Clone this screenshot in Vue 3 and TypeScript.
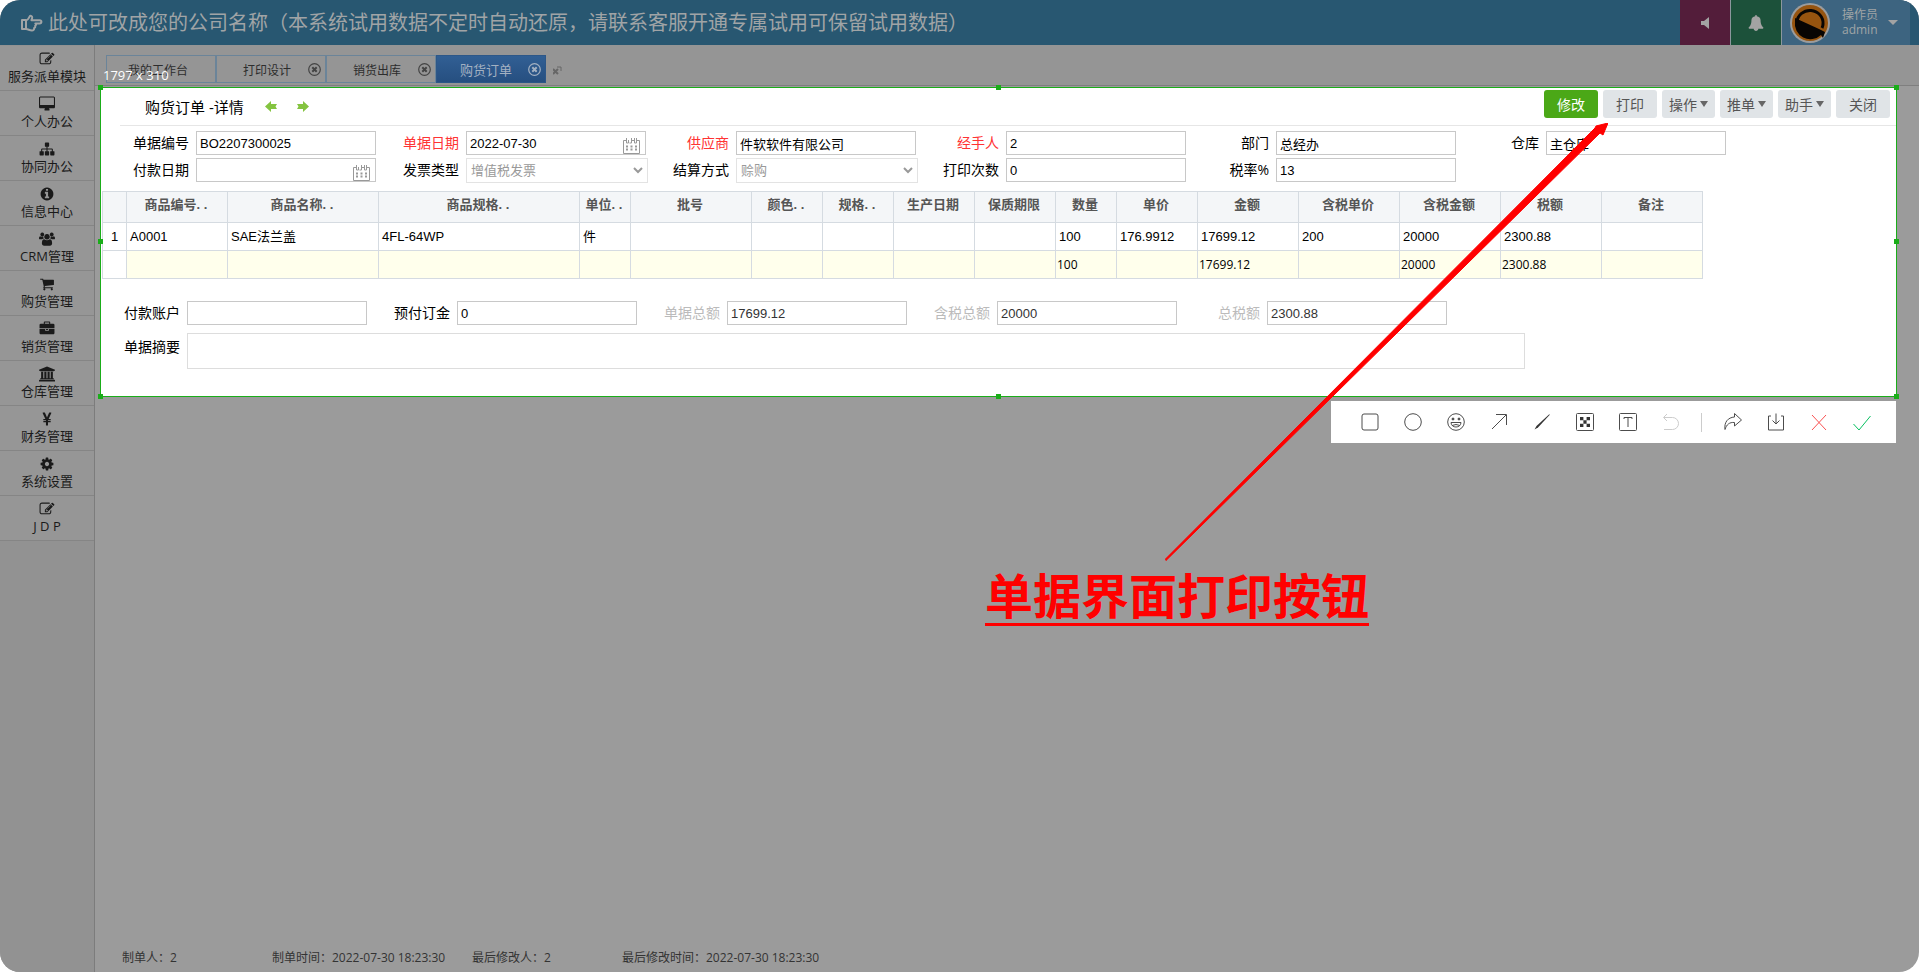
<script setup lang="ts">
import { ref } from 'vue'

interface MenuItem { label: string; icon: string }
interface Tab { label: string; closable: boolean; active?: boolean }
interface Field {
  id: string
  label: string
  value: string
  kind?: 'date' | 'select'
  tone?: 'required' | 'muted'
}
interface Column { title: string; width: number; value: string; total: string }

const menu: MenuItem[] = [
  { label: '服务派单模块', icon: 'edit' },
  { label: '个人办公', icon: 'desktop' },
  { label: '协同办公', icon: 'sitemap' },
  { label: '信息中心', icon: 'info' },
  { label: 'CRM管理', icon: 'users' },
  { label: '购货管理', icon: 'cart' },
  { label: '销货管理', icon: 'briefcase' },
  { label: '仓库管理', icon: 'bank' },
  { label: '财务管理', icon: 'yen' },
  { label: '系统设置', icon: 'gear' },
  { label: 'J D P', icon: 'edit' }
]

const glyphs: Record<string, string> = {
  edit: 'M888 1184l116-116-152-152-116 116v56h96v96h56zm440-720q-16-16-33 1l-350 350q-17 17-1 33t33-1l350-350q17-17 1-33zm80 594v190q0 119-84.5 203.5t-203.5 84.5h-832q-119 0-203.5-84.5t-84.5-203.5v-832q0-119 84.5-203.5t203.5-84.5h832q63 0 117 25 15 7 18 23 3 17-9 29l-49 49q-14 14-32 8-23-6-45-6h-832q-66 0-113 47t-47 113v832q0 66 47 113t113 47h832q66 0 113-47t47-113v-126q0-13 9-22l64-64q15-15 35-7t20 29zm-96-738l288 288-672 672h-288v-288zm444 132l-92 92-288-288 92-92q28-28 68-28t68 28l152 152q28 28 28 68t-28 68z',
  desktop: 'M1728 992v-832q0-13-9.5-22.5t-22.5-9.5h-1600q-13 0-22.5 9.5t-9.5 22.5v832q0 13 9.5 22.5t22.5 9.5h1600q13 0 22.5-9.5t9.5-22.5zm128-832v1088q0 66-47 113t-113 47h-544q0 37 16 77.5t32 71 16 43.5q0 26-19 45t-45 19h-512q-26 0-45-19t-19-45q0-14 16-44t32-70 16-78h-544q-66 0-113-47t-47-113v-1088q0-66 47-113t113-47h1600q66 0 113 47t47 113z',
  sitemap: 'M1792 1248v320q0 40-28 68t-68 28h-320q-40 0-68-28t-28-68v-320q0-40 28-68t68-28h96v-192h-512v192h96q40 0 68 28t28 68v320q0 40-28 68t-68 28h-320q-40 0-68-28t-28-68v-320q0-40 28-68t68-28h96v-192h-512v192h96q40 0 68 28t28 68v320q0 40-28 68t-68 28h-320q-40 0-68-28t-28-68v-320q0-40 28-68t68-28h96v-192q0-52 38-90t90-38h512v-192h-96q-40 0-68-28t-28-68v-320q0-40 28-68t68-28h320q40 0 68 28t28 68v320q0 40-28 68t-68 28h-96v192h512q52 0 90 38t38 90v192h96q40 0 68 28t28 68z',
  info: 'M1152 1376v-160q0-14-9-23t-23-9h-96v-512q0-14-9-23t-23-9h-320q-14 0-23 9t-9 23v160q0 14 9 23t23 9h96v320h-96q-14 0-23 9t-9 23v160q0 14 9 23t23 9h448q14 0 23-9t9-23zm-128-896v-160q0-14-9-23t-23-9h-192q-14 0-23 9t-9 23v160q0 14 9 23t23 9h192q14 0 23-9t9-23zm640 416q0 209-103 385.5t-279.5 279.5-385.5 103-385.5-103-279.5-279.5-103-385.5 103-385.5 279.5-279.5 385.5-103 385.5 103 279.5 279.5 103 385.5z',
  users: 'M330 130a230 230 0 1 0 1 0zM1462 130a230 230 0 1 0 1 0zM896 300a330 330 0 1 0 1 0zM-60 880V760q0-190 150-190 60 60 240 60 70 0 120-25-10 120 80 245-130 5-220 90H60q-120 0-120-60zM1852 880V760q0-190-150-190-60 60-240 60-70 0-120-25 10 120-80 245 130 5 220 90h250q120 0 120-60zM280 1450q0-520 290-520 130 110 326 110t326-110q290 0 290 520 0 250-240 250H520q-240 0-240-250z',
  cart: 'M704 1536q0 52-38 90t-90 38-90-38-38-90 38-90 90-38 90 38 38 90zm896 0q0 52-38 90t-90 38-90-38-38-90 38-90 90-38 90 38 38 90zm128-1088v512q0 24-16.5 42.5t-40.5 21.5l-1044 122q13 60 13 70 0 16-24 64h920q26 0 45 19t19 45-19 45-45 19h-1024q-26 0-45-19t-19-45q0-11 8-31.5t16-36 21.5-40 15.5-29.5l-177-823h-204q-26 0-45-19t-19-45 19-45 45-19h256q16 0 28.5 6.5t19.5 15.5 13 24.5 8 26 5.5 29.5 4.5 26h1201q26 0 45 19t19 45z',
  briefcase: 'M640 256h512v-128h-512v128zm1152 640v480q0 66-47 113t-113 47h-1472q-66 0-113-47t-47-113v-480h672v160q0 26 19 45t45 19h320q26 0 45-19t19-45v-160h672zm-768 0v128h-256v-128h256zm768-480v384h-1792v-384q0-66 47-113t113-47h352v-160q0-40 28-68t68-28h576q40 0 68 28t28 68v160h352q66 0 113 47t47 113z',
  bank: 'M896 0l960 384v128h-128q0 64-69 64H133q-69 0-69-64H-64V384zM192 640h256v768h128V640h256v768h128V640h256v768h128V640h256v768h59q69 0 69 64v64H64v-64q0-64 69-64h59zM1787 1600q69 0 69 64v128H-64v-128q0-64 69-64z',
  yen: 'M1000 1664H790q-20 0-20-26v-340H480q-26 0-26-24v-110q0-26 26-26h290v-94H480q-26 0-26-24V910q0-26 26-26h220L368 170q-12-42 30-42h220q20 0 30 20 220 470 250 570 40-110 250-570 10-20 30-20h210q42 0 30 42l-330 714h226q26 0 26 26v110q0 24-26 24h-300v94h300q26 0 26 26v110q0 24-26 24h-300v340q0 26-14 26z',
  gear: 'M1152 896q0-106-75-181t-181-75-181 75-75 181 75 181 181 75 181-75 75-181zm512-109v222q0 12-8 23t-20 13l-185 28q-19 54-39 91 35 50 107 138 10 12 10 25t-9 23q-27 37-99 108t-94 71q-12 0-26-9l-138-108q-44 23-91 38-16 136-29 186-7 28-36 28h-222q-14 0-24.5-8.5t-11.5-21.5l-28-184q-49-16-90-37l-141 107q-10 9-25 9-14 0-25-11-126-114-165-168-7-10-7-23 0-12 8-23 15-21 51-66.5t54-70.5q-27-50-41-99l-183-27q-13-2-21-12.5t-8-23.5v-222q0-12 8-23t19-13l186-28q14-46 39-92-40-57-107-138-10-12-10-24 0-10 9-23 26-36 98.5-107.5t94.5-71.5q13 0 26 10l138 107q44-23 91-38 16-136 29-186 7-28 36-28h222q14 0 24.5 8.5t11.5 21.5l28 184q49 16 90 37l142-107q9-9 24-9 13 0 25 10 129 119 165 170 7 8 7 22 0 12-8 23-15 21-51 66.5t-54 70.5q26 50 41 98l183 28q13 2 21 12.5t8 23.5z',
  bell: 'M1728 1408q0 52-38 90t-90 38h-448q0 106-75 181t-181 75-181-75-75-181h-448q-52 0-90-38t-38-90q50-42 91-88t85-119.5 74.5-158.5 50-206 19.5-260q0-152 117-282.5t307-158.5q-8-19-8-39 0-40 28-68t68-28 68 28 28 68q0 20-8 39 190 28 307 158.5t117 282.5q0 139 19.5 260t50 206 74.5 158.5 85 119.5 91 88z'
}

const tabs: Tab[] = [
  { label: '我的工作台', closable: false },
  { label: '打印设计', closable: true },
  { label: '销货出库', closable: true },
  { label: '购货订单', closable: true, active: true }
]

const fields = ref<Field[]>([
  { id: 'billNo', label: '单据编号', value: 'BO2207300025' },
  { id: 'billDate', label: '单据日期', value: '2022-07-30', kind: 'date', tone: 'required' },
  { id: 'supplier', label: '供应商', value: '件软软件有限公司', tone: 'required' },
  { id: 'handler', label: '经手人', value: '2', tone: 'required' },
  { id: 'dept', label: '部门', value: '总经办' },
  { id: 'store', label: '仓库', value: '主仓库' },
  { id: 'payDate', label: '付款日期', value: '', kind: 'date' },
  { id: 'invoice', label: '发票类型', value: '增值税发票', kind: 'select' },
  { id: 'settle', label: '结算方式', value: '赊购', kind: 'select' },
  { id: 'prints', label: '打印次数', value: '0' },
  { id: 'rate', label: '税率%', value: '13' }
])

const totals = ref<Field[]>([
  { id: 'account', label: '付款账户', value: '' },
  { id: 'deposit', label: '预付订金', value: '0' },
  { id: 'sum', label: '单据总额', value: '17699.12', tone: 'muted' },
  { id: 'taxedSum', label: '含税总额', value: '20000', tone: 'muted' },
  { id: 'taxSum', label: '总税额', value: '2300.88', tone: 'muted' }
])
const summary = ref('')

const columns: Column[] = [
  { title: '商品编号. .', width: 101, value: 'A0001', total: '' },
  { title: '商品名称. .', width: 151, value: 'SAE法兰盖', total: '' },
  { title: '商品规格. .', width: 201, value: '4FL-64WP', total: '' },
  { title: '单位. .', width: 51, value: '件', total: '' },
  { title: '批号', width: 121, value: '', total: '' },
  { title: '颜色. .', width: 71, value: '', total: '' },
  { title: '规格. .', width: 71, value: '', total: '' },
  { title: '生产日期', width: 81, value: '', total: '' },
  { title: '保质期限', width: 81, value: '', total: '' },
  { title: '数量', width: 61, value: '100', total: '100' },
  { title: '单价', width: 81, value: '176.9912', total: '' },
  { title: '金额', width: 101, value: '17699.12', total: '17699.12' },
  { title: '含税单价', width: 101, value: '200', total: '' },
  { title: '含税金额', width: 101, value: '20000', total: '20000' },
  { title: '税额', width: 101, value: '2300.88', total: '2300.88' },
  { title: '备注', width: 101, value: '', total: '' }
]

const actions = [
  { label: '修改', primary: true, menu: false },
  { label: '打印', primary: false, menu: false },
  { label: '操作', primary: false, menu: true },
  { label: '推单', primary: false, menu: true },
  { label: '助手', primary: false, menu: true },
  { label: '关闭', primary: false, menu: false }
]

const handles = ['nw', 'n', 'ne', 'w', 'e', 'sw', 's', 'se']
const tools = ['rect', 'ellipse', 'emoji', 'arrow', 'pen', 'mosaic', 'text', 'undo', 'share', 'save', 'cancel', 'confirm']
</script>

<template>
  <div class="page">
    <header class="top">
      <svg class="hand" viewBox="0 0 22 18" aria-hidden="true">
        <path d="M1 6h4v9H1zM5 6.500c2-.3 2.500-2 3.500-3.800.8-1.400 2.800-1 2.700.8 0 1-.4 1.800-.8 2.700h8.200c2.400 0 2.400 3.200 0 3.200h-4.300c1 .8.900 2-.2 2.500.5 1-.1 2-1 2.200.2 1.600-.7 2.400-2.200 2.400-2.600 0-3.400-1.300-5.900-1.500" />
      </svg>
      <h1>此处可改成您的公司名称（本系统试用数据不定时自动还原，请联系客服开通专属试用可保留试用数据）</h1>
      <div class="top-right">
        <button class="tile sound" type="button" aria-label="声音">
          <svg width="8" height="12" viewBox="0 0 8 12"><path d="M0 4h3l5-4v12L3 8H0z" /></svg>
        </button>
        <button class="tile bell" type="button" aria-label="通知">
          <svg width="16" height="16" viewBox="0 0 1792 1792"><path :d="glyphs.bell" /></svg>
        </button>
        <button class="user" type="button">
          <svg class="avatar" width="40" height="40" viewBox="0 0 40 40" aria-hidden="true">
            <circle cx="20" cy="20" r="20" fill="#9c9c9c" />
            <circle cx="20" cy="20" r="18" fill="#96540f" />
            <path d="M5 18.500A15.500 15.500 0 0 0 31 32l2 3 2-6-6-3-24-11z" fill="#080503" />
            <path d="M7 19A13 12.500 0 0 1 33 21q0 2-1 4" fill="none" stroke="#080503" stroke-width="3" />
          </svg>
          <span class="who"><span>操作员</span><span>admin</span></span>
          <svg width="10" height="5" viewBox="0 0 10 5" aria-hidden="true"><path d="M0 0h10L5 5z" /></svg>
        </button>
      </div>
    </header>

    <div class="body">
      <nav class="side">
        <a v-for="item in menu" :key="item.label" href="#">
          <svg width="16" height="16" viewBox="-64 0 1920 1792" aria-hidden="true"><path :d="glyphs[item.icon]" /></svg>
          <span>{{ item.label }}</span>
        </a>
      </nav>

      <main class="main">
        <div class="tabs">
          <div v-for="tab in tabs" :key="tab.label" class="tab" :class="{ active: tab.active }">
            <a href="#">{{ tab.label }}</a>
            <button v-if="tab.closable" type="button" :aria-label="'关闭' + tab.label">
              <svg width="13" height="13" viewBox="0 0 13 13"><circle cx="6.500" cy="6.500" r="5.800" stroke-width="1.200" /><path d="M4.300 4.300l4.400 4.400M8.700 4.300l-4.400 4.400" stroke-width="2" /></svg>
            </button>
          </div>
          <svg class="shrink" width="9" height="9" viewBox="0 0 9 9" aria-hidden="true"><path d="M0 3l5 5M5 3L0 8" stroke-width="2" /><path d="M4 1h4v4" stroke-width="1" /></svg>
        </div>

        <section class="capture">
          <span class="size">1797 x 310</span>
          <i v-for="h in handles" :key="h" class="handle" :class="h"></i>

          <div class="bar">
            <h2>购货订单 -详情</h2>
            <button class="step" type="button" aria-label="上一单">
              <svg width="12" height="11" viewBox="0 0 12 11"><path d="M0 5.500L6 0v3h6l-1.500 2.500L12 8H6v3z" /></svg>
            </button>
            <button class="step" type="button" aria-label="下一单">
              <svg width="12" height="11" viewBox="0 0 12 11"><path d="M12 5.500L6 0v3H0l1.500 2.500L0 8h6v3z" /></svg>
            </button>
            <div class="actions">
              <button v-for="a in actions" :key="a.label" type="button" class="btn" :class="{ primary: a.primary, more: a.menu }">
                {{ a.label }}<svg v-if="a.menu" width="8" height="6" viewBox="0 0 8 6" aria-hidden="true"><path d="M0 0h8L4 6z" /></svg>
              </button>
            </div>
          </div>

          <div class="grid head-grid">
            <div v-for="f in fields" :key="f.id" class="field" :class="f.tone">
              <label :for="f.id">{{ f.label }}</label>
              <div class="control">
                <template v-if="f.kind === 'select'">
                  <select :id="f.id" v-model="f.value" disabled><option>{{ f.value }}</option></select>
                  <svg class="chev" width="10" height="7" viewBox="0 0 10 7" aria-hidden="true"><path d="M1 1l4 4 4-4" /></svg>
                </template>
                <template v-else>
                  <input :id="f.id" v-model="f.value" type="text" />
                  <svg v-if="f.kind === 'date'" class="cal" width="17" height="17" viewBox="0 0 17 17" aria-hidden="true">
                    <path d="M3.500 3.500h-3v13h16v-13h-3M3.500 1v5h2V3M8.500 1v5h-2M8.500 3.500h3M11.500 1v5h2V1" />
                    <path d="M3 9.500h11M3 12.500h11" stroke-width="2" stroke-dasharray="2 2.500" />
                  </svg>
                </template>
              </div>
            </div>
          </div>

          <table>
            <colgroup><col class="num" /><col v-for="(c, i) in columns" :key="i" :style="{ width: c.width + 'px' }" /></colgroup>
            <thead>
              <tr><th></th><th v-for="(c, i) in columns" :key="i" scope="col">{{ c.title }}</th></tr>
            </thead>
            <tbody>
              <tr><td class="idx">1</td><td v-for="(c, i) in columns" :key="i">{{ c.value }}</td></tr>
              <tr class="total"><td class="idx"></td><td v-for="(c, i) in columns" :key="i">{{ c.total }}</td></tr>
            </tbody>
          </table>

          <div class="foot-form">
            <div class="grid">
              <div v-for="f in totals" :key="f.id" class="field" :class="f.tone">
                <label :for="f.id">{{ f.label }}</label>
                <div class="control"><input :id="f.id" v-model="f.value" type="text" /></div>
              </div>
            </div>
            <div class="field memo">
              <label for="summary">单据摘要</label>
              <textarea id="summary" v-model="summary"></textarea>
            </div>
          </div>
        </section>

        <div class="tools">
          <template v-for="t in tools" :key="t">
            <i v-if="t === 'share'" class="sep"></i>
            <button type="button" :class="t" :aria-label="t">
              <svg width="20" height="20" viewBox="0 0 20 20">
                <rect v-if="t === 'rect'" x="2" y="2" width="16" height="16" rx="2" />
                <circle v-else-if="t === 'ellipse'" cx="10" cy="10" r="8.300" />
                <template v-else-if="t === 'emoji'">
                  <circle cx="10" cy="10" r="8.300" />
                  <path d="M5 10.500h10c0 6-10 6-10 0zM6 13.500q4-2 8 0" />
                  <circle cx="7" cy="7" r="1" class="solid" /><circle cx="13" cy="7" r="1" class="solid" />
                </template>
                <path v-else-if="t === 'arrow'" d="M3 17L17 3M7 2.500h10.500V13" />
                <path v-else-if="t === 'pen'" class="solid" d="M2.500 17.500l2-3.500L17 2.500h1L6 15.500z" stroke="none" />
                <template v-else-if="t === 'mosaic'">
                  <rect x="1.500" y="1.500" width="17" height="17" rx="1" />
                  <path class="solid" d="M5 5h3.400v3.300H5zM11.600 5H15v3.300h-3.400zM8.400 8.300h3.200v3.400H8.400zM5 11.700h3.400V15H5zM11.600 11.700H15V15h-3.400z" stroke="none" />
                </template>
                <template v-else-if="t === 'text'">
                  <rect x="1.500" y="1.500" width="17" height="17" rx="1" /><path d="M6 7V5.500h8V7M10 5.500V15" />
                </template>
                <path v-else-if="t === 'undo'" d="M6 2L2.500 5.500 6 9M3 5.500h8.500a5.500 5.500 0 0 1 0 12H3" />
                <path v-else-if="t === 'share'" d="M11.500 1.500l7 6.500-7 6v-3.500C6.500 10 3.500 12.500 2 17.500 1 10 5 5.500 11.500 5z" />
                <path v-else-if="t === 'save'" d="M5 4H2.500v14h15V4H15M10 1.500V12M6.500 8.500L10 12l3.500-3.500" />
                <path v-else-if="t === 'cancel'" d="M3 3l14 15M17 3L3 18" />
                <path v-else d="M1.500 12l5.500 6L18.500 4" />
              </svg>
            </button>
          </template>
        </div>

        <footer class="meta">
          <span>制单人：2</span>
          <span>制单时间：2022-07-30 18:23:30</span>
          <span>最后修改人：2</span>
          <span>最后修改时间：2022-07-30 18:23:30</span>
        </footer>
      </main>
    </div>

    <svg class="pointer" width="443" height="438" viewBox="0 0 443 438" aria-hidden="true">
      <path d="M0 436.500L430 5 431 3 443 0 438 12 435 10 1 437.500z" />
    </svg>
    <strong class="note">单据界面打印按钮</strong>
  </div>
</template>

<style>
body { margin: 0; background: #fff; }
</style>

<style scoped>
* { box-sizing: border-box; }
.page {
  position: relative;
  display: flex;
  flex-direction: column;
  min-height: 100vh;
  overflow: hidden;
  border-radius: 20px;
  background: #9b9b9b;
  color: #000;
  font-family: "Open Sans", "Noto Sans CJK SC", sans-serif;
  font-size: 13px;
}
button { margin: 0; padding: 0; border: 0; background: none; font: inherit; color: inherit; }
a { color: inherit; text-decoration: none; }
svg { flex: none; display: block; }

.top { display: flex; align-items: center; height: 45px; padding-left: 21px; background: #285771; color: #a0a4a6; }
.hand { width: 22px; height: 18px; fill: none; stroke: #a0a4a6; stroke-width: 2; stroke-linejoin: round; }
h1 { margin: 0 0 0 5px; padding-bottom: 2px; font-size: 20px; line-height: 28px; font-weight: 400; font-family: "Noto Sans CJK SC", sans-serif; white-space: nowrap; }
.top-right { display: flex; gap: 1px; height: 45px; margin-left: auto; padding-right: 9px; fill: #a3a3a3; }
.tile { display: flex; align-items: center; justify-content: center; width: 50px; box-shadow: 1px 0 #8c979d; }
.sound { background: #531d3a; }
.bell { background: #1c513a; }
.user { display: flex; align-items: center; width: 128px; padding-left: 8px; background: #3d6480; }
.who { display: flex; flex-direction: column; width: 36px; margin: 0 10px 0 12px; padding-bottom: 2px; font-size: 12px; line-height: 15px; text-align: left; white-space: nowrap; }

.body { display: flex; flex: 1; }
.side { width: 95px; flex: none; padding-top: 1px; border-right: 1px solid #7c7c7c; background: #929292; }
.side a { display: flex; flex-direction: column; align-items: center; height: 45px; padding-top: 5px; border-bottom: 1px solid #858585; background: #969696; color: #1a1a1a; fill: #1a1a1a; line-height: 18px; white-space: nowrap; }
.main { display: flex; flex-direction: column; flex: 1; min-width: 0; }

.tabs { display: flex; align-items: flex-end; height: 41px; padding: 0 0 2px 11px; border-bottom: 1px solid #7f7f7f; background: #959595; }
.tab { display: flex; align-items: center; width: 110px; height: 28px; padding: 0 4px 0 21px; border: 1px solid #6b8499; color: #2d2d2d; font-size: 12px; }
.tab a { flex: 1; padding-left: 5px; padding-top: 1px; white-space: nowrap; }
.tab:first-child a { padding-left: 0; }
.tab button { width: 13px; height: 13px; }
.tab svg { fill: none; stroke: #444; }
.tab.active { border-color: #2d5788; background: linear-gradient(#315f94, #264f80); color: #a3b1c2; font-size: 13px; }
.tab.active a { padding-left: 2px; }
.tab.active svg { stroke: #a3b1c2; }
.shrink { margin: 0 0 8px 7px; fill: none; stroke: #666; }

.capture { position: relative; margin: 1px 22px 0 5px; padding-bottom: 27px; border: 1px solid #1aad19; background: #fff; }
.size { position: absolute; left: 2px; top: -22px; color: #fff; font-size: 13px; line-height: 18px; }
.handle { position: absolute; width: 5px; height: 5px; background: #1aad19; }
.nw, .n, .ne { top: -3px; }
.sw, .s, .se { bottom: -3px; }
.nw, .w, .sw { left: -3px; }
.ne, .e, .se { right: -3px; }
.n, .s { left: calc(50% - 3px); }
.w, .e { top: calc(50% - 3px); }

.bar { display: flex; align-items: center; height: 38px; margin-left: 19px; border-bottom: 1px solid #e6e6e6; }
h2 { margin: 0 21px 0 25px; font-size: 15px; line-height: 22px; font-weight: 400; white-space: nowrap; }
.step { margin-right: 20px; fill: #84c440; }
.actions { display: flex; gap: 5px; margin: 0 6px 6px auto; }
.btn { display: flex; align-items: center; justify-content: center; width: 54px; height: 28px; border-radius: 3px; background: #e0e4e7; color: #555; font-size: 14px; white-space: nowrap; }
.btn.more { width: 53px; gap: 3px; fill: #666; }
.btn.primary { background: #4ba817; color: #fff; }

.grid { display: grid; grid-template-columns: repeat(auto-fill, 261px); gap: 3px 9px; }
.head-grid { padding: 5px 0 0 14px; }
.field { display: flex; align-items: center; gap: 7px; height: 24px; }
label { width: 74px; font-size: 14px; line-height: 20px; text-align: right; white-space: nowrap; }
.required label { color: #f33; }
.muted label { color: #bbb; }
.muted input { color: #333; }
.control { position: relative; width: 180px; height: 24px; }
input, select, textarea {
  display: block;
  width: 180px;
  height: 24px;
  margin: 0;
  padding: 0 3px;
  border: 1px solid #c8c8c8;
  border-radius: 0;
  outline: 0;
  background: #fff;
  color: #000;
  font: 13px "Liberation Sans", "Noto Sans CJK SC", sans-serif;
}
select { width: 182px; height: 25px; padding-left: 4px; border-color: #e3e3e3; color: #999; opacity: 1; appearance: none; }
.chev { position: absolute; right: 3px; top: 9px; fill: none; stroke: #999; stroke-width: 2; }
.cal { position: absolute; right: 6px; top: 6px; fill: none; stroke: #999; }

table { width: 1601px; margin: 9px 0 0 1px; border-collapse: collapse; table-layout: fixed; font: 13px "Liberation Sans", "Noto Sans CJK SC", sans-serif; }
.num { width: 24px; }
th, td { padding: 0; border: 1px solid #d5dbe1; white-space: nowrap; }
th { height: 31px; padding: 0 2px 4px 0; background: #f4f6f8; color: #555; font-weight: 700; line-height: 18px; }
td { height: 28px; padding-left: 3px; line-height: 18px; }
td.idx { padding: 0; text-align: center; }
.total td { padding-left: 1px; background: #ffffec; font-family: "Open Sans", sans-serif; font-size: 12px; }
.total td.idx { background: #fff; }

.foot-form { display: flex; flex-direction: column; gap: 8px; padding: 22px 0 0 5px; }
.memo { align-items: flex-start; height: auto; }
.memo label { padding-top: 4px; }
textarea { width: 1338px; height: 36px; border-color: #ddd; resize: none; }

.tools { display: flex; align-items: center; align-self: flex-end; height: 42px; margin: 4px 23px 0 0; padding: 0 13px 0 17px; background: #fff; }
.tools button { display: flex; align-items: center; justify-content: center; width: 43px; height: 42px; }
.tools svg { fill: none; stroke: #4c4c4c; stroke-width: 1; }
.tools .solid { fill: #333; }
.tools .undo svg { stroke: #ccc; }
.tools .cancel svg { stroke: #fa5151; }
.tools .confirm svg { stroke: #07c160; }
.sep { width: 1px; height: 19px; margin: 0 9px; background: #ccc; }

.meta { display: flex; margin-top: auto; padding: 0 0 5px 27px; color: #333; font-size: 12px; line-height: 18px; white-space: nowrap; }
.meta span:nth-child(odd) { width: 150px; }
.meta span:nth-child(2) { width: 200px; }

.pointer { position: absolute; left: 1165px; top: 123px; fill: #f00; stroke: #f00; stroke-width: 1; }
.note { position: absolute; left: 985px; top: 567px; padding-bottom: 4px; border-bottom: 3px solid #f00; color: #f00; font: 700 48px/52px "Noto Sans CJK SC", sans-serif; white-space: nowrap; }
</style>
